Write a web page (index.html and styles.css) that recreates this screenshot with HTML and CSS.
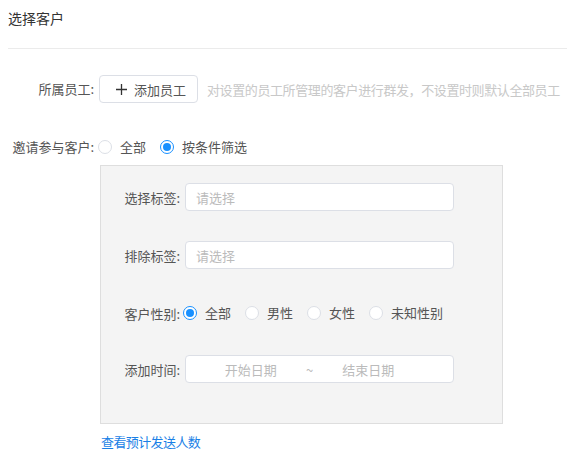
FILE: index.html
```html
<!DOCTYPE html>
<html lang="zh-CN">
<head>
<meta charset="utf-8">
<title>选择客户</title>
<link rel="stylesheet" href="styles.css">
</head>
<body>
<div class="page">
  <div class="header">选择客户</div>
  <div class="form">
    <div class="row row-staff">
      <div class="label">所属员工:</div>
      <button class="btn-add" type="button">
        <svg class="plus" width="11" height="11" viewBox="0 0 11 11"><path d="M5.5 0v11M0 5.5h11" stroke="#333" stroke-width="1.3" fill="none"/></svg>
        <span>添加员工</span>
      </button>
      <span class="hint">对设置的员工所管理的客户进行群发，不设置时则默认全部员工</span>
    </div>
    <div class="row row-invite">
      <div class="label">邀请参与客户:</div>
      <div class="radios">
        <label class="radio"><span class="dot"></span><span>全部</span></label>
        <label class="radio checked"><span class="dot"></span><span>按条件筛选</span></label>
      </div>
    </div>
    <div class="panel">
      <div class="prow prow-1">
        <div class="plabel">选择标签:</div>
        <div class="input"><span class="ph">请选择</span></div>
      </div>
      <div class="prow prow-2">
        <div class="plabel">排除标签:</div>
        <div class="input"><span class="ph">请选择</span></div>
      </div>
      <div class="prow prow-3">
        <div class="plabel">客户性别:</div>
        <div class="radios gender">
          <label class="radio checked"><span class="dot"></span><span>全部</span></label>
          <label class="radio"><span class="dot"></span><span>男性</span></label>
          <label class="radio"><span class="dot"></span><span>女性</span></label>
          <label class="radio"><span class="dot"></span><span>未知性别</span></label>
        </div>
      </div>
      <div class="prow prow-4">
        <div class="plabel">添加时间:</div>
        <div class="input range">
          <span class="ph rs">开始日期</span>
          <span class="sep">~</span>
          <span class="ph rs">结束日期</span>
        </div>
      </div>
    </div>
    <a class="link" href="#">查看预计发送人数</a>
  </div>
</div>
</body>
</html>
```

FILE: styles.css
```css
* { box-sizing: border-box; }
html, body { margin: 0; padding: 0; background: #fff; }
body {
  font-family: "Noto Sans CJK SC", "Noto Sans", sans-serif;
  font-size: 13px;
  color: #555;
  width: 567px;
  overflow: hidden;
}
.page { padding-left: 8px; }
.header {
  font-size: 14px;
  line-height: 20px;
  color: #333;
  padding-top: 8px;
  height: 49px;
  border-bottom: 1px solid #ebebeb;
}
.form { padding-top: 26px; }
.row { display: flex; align-items: center; }
.label {
  width: 86px;
  text-align: right;
  color: #555;
  line-height: 20px;
  flex: none;
}
.row-staff { height: 28px; }
.btn-add {
  flex: none;
  margin-left: 5px;
  height: 28px;
  width: 99px;
  border: 1px solid #dcdfe6;
  border-radius: 4px;
  background: #fff;
  display: flex;
  align-items: center;
  padding: 0 0 0 16px;
  font: inherit;
  color: #555;
  cursor: pointer;
}
.btn-add .plus { margin-right: 7px; flex: none; }
.hint { margin-left: 9px; color: #c8c8c8; white-space: nowrap; letter-spacing: -0.4px; }
.row-invite { margin-top: 34px; height: 20px; }
.radios { display: flex; align-items: center; }
.row-invite .radios { margin-left: 4px; }
.radio { display: flex; align-items: center; margin-right: 14px; line-height: 20px; color: #555; }
.dot {
  width: 14px; height: 14px;
  border: 1px solid #dcdfe6;
  border-radius: 50%;
  background: #fff;
  margin-right: 8px;
  position: relative;
  flex: none;
}
.radio.checked .dot { border-color: #1890ff; }
.radio.checked .dot::after {
  content: "";
  position: absolute;
  left: 2px; top: 2px;
  width: 8px; height: 8px;
  border-radius: 50%;
  background: #1890ff;
}
.panel {
  margin-top: 8px;
  margin-left: 92px;
  width: 403px;
  background: #f4f4f4;
  border: 1px solid #dedede;
  padding: 17px 0 40px;
}
.prow { display: flex; align-items: center; height: 28px; }
.prow-2 { margin-top: 30px; }
.prow-3 { margin-top: 30px; }
.prow-4 { margin-top: 28px; }
.plabel { width: 79px; text-align: right; flex: none; color: #555; }
.input {
  margin-left: 5px;
  width: 269px;
  height: 28px;
  border: 1px solid #dcdfe6;
  border-radius: 4px;
  background: #fff;
  display: flex;
  align-items: center;
  padding-left: 10px;
}
.ph { color: #bbb; }
.gender { margin-left: 3px; }
.range { padding: 0 38px 0 18px; }
.rs { flex: 1; text-align: center; }
.sep { width: 24px; text-align: center; color: #bbb; }
.link {
  display: inline-block;
  margin-top: 8px;
  margin-left: 93px;
  color: #1a7fe6;
  text-decoration: none;
  line-height: 20px;
  letter-spacing: -0.6px;
}
```
